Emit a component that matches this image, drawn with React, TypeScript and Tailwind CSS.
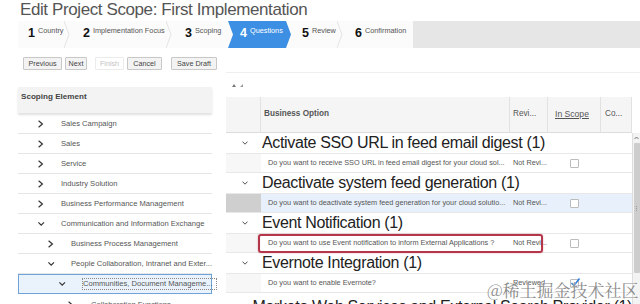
const steps = [
  { n: 1, label: "Country", w: "w-[52px]", pl: "pl-[10px]", sep: true },
  { n: 2, label: "Implementation Focus", w: "w-[102px]", pl: "pl-[13px]", sep: true },
  { n: 3, label: "Scoping", w: "w-[56px]", pl: "pl-[13px]", sep: false },
  { n: 4, label: "Questions", w: "w-[63px]", pl: "pl-[12px]", sep: false, active: true },
  { n: 5, label: "Review", w: "w-[52px]", pl: "pl-[11px]", sep: true },
  { n: 6, label: "Confirmation", w: "w-[70px]", pl: "pl-[12px]", sep: false },
];

const tree = [
  { t: "Sales Campaign", l: 1, open: false },
  { t: "Sales", l: 1, open: false },
  { t: "Service", l: 1, open: false },
  { t: "Industry Solution", l: 1, open: false },
  { t: "Business Performance Management", l: 1, open: false },
  { t: "Communication and Information Exchange", l: 1, open: true },
  { t: "Business Process Management", l: 2, open: false },
  { t: "People Collaboration, Intranet and Exter...", l: 2, open: true },
  { t: "Communities, Document Manageme...", l: 3, open: true, selected: true },
  { t: "Collaboration Functions", l: 4, open: false },
];

const indent: Record<number, string> = {
  1: "pl-[20px]",
  2: "pl-[30px]",
  3: "pl-[40px]",
  4: "pl-[50px]",
};

const groups = [
  {
    title: "Activate SSO URL in feed email digest (1)",
    q: "Do you want to receive SSO URL in feed email digest for your cloud sol...",
    status: "Not Revi...",
  },
  {
    title: "Deactivate system feed generation (1)",
    q: "Do you want to deactivate system feed generation for your cloud solutio...",
    status: "Not Revi...",
    selected: true,
  },
  {
    title: "Event Notification (1)",
    q: "Do you want to use Event notification to inform External Applications ?",
    status: "Not Revi...",
    marked: true,
  },
  {
    title: "Evernote Integration (1)",
    q: "Do you want to enable Evernote?",
    status: "Reviewed",
    checked: true,
  },
];

function TreeChevron({ open }: { open: boolean }) {
  return (
    <svg width="8" height="8" viewBox="0 0 8 8" className="shrink-0">
      {open ? (
        <path d="M0.4 2.4 L3.2 5.2 L6 2.4" fill="none" stroke="#333" strokeWidth="1.2" />
      ) : (
        <path d="M0.6 0.8 L4.4 4 L0.6 7.2" fill="none" stroke="#333" strokeWidth="1.2" />
      )}
    </svg>
  );
}

function GroupChevron() {
  return (
    <svg width="6" height="4" viewBox="0 0 6 4">
      <path d="M0.5 0.6 L3 3.2 L5.5 0.6" fill="none" stroke="#555" strokeWidth="1" />
    </svg>
  );
}

function Checkbox({ checked }: { checked?: boolean }) {
  return (
    <div className="relative h-[9px] w-[9px] rounded-[1px] border border-[#bcbcbc] bg-white">
      {checked && (
        <svg width="11" height="11" viewBox="0 0 11 11" className="absolute -left-px -top-[3px]">
          <path d="M1.5 6 L4 8.5 L9.5 1.5" fill="none" stroke="#2f7fd6" strokeWidth="1.6" />
        </svg>
      )}
    </div>
  );
}

function Steps() {
  return (
    <div className="ml-[18px] flex h-[27px] bg-[#e6e6e6]">
      <div className="flex bg-[#fbfbfb]">
        {steps.map((s) =>
          s.active ? (
            <div
              key={s.n}
              className={`flex ${s.w} ${s.pl} bg-[#3d8fe4] pt-[6px] text-white [clip-path:polygon(0_0,calc(100%_-_5px)_0,100%_50%,calc(100%_-_5px)_100%,0_100%,5px_50%)]`}
            >
              <span className="text-[12.5px] font-bold leading-none">{s.n}</span>
              <span className="ml-[3px] whitespace-nowrap text-[7.3px] leading-none">{s.label}</span>
            </div>
          ) : (
            <div key={s.n} className={`flex ${s.w} ${s.pl}`}>
              <span className="pt-[6px] text-[12.5px] font-bold leading-none text-[#111]">{s.n}</span>
              <span className="ml-[3px] whitespace-nowrap pt-[6px] text-[7.3px] leading-none text-[#555]">
                {s.label}
              </span>
              {s.sep && (
                <svg width="6" height="27" viewBox="0 0 6 27" className="ml-auto shrink-0">
                  <path d="M0 0 L5 13.5 L0 27" fill="none" stroke="#e4e4e4" strokeWidth="1" />
                </svg>
              )}
            </div>
          )
        )}
      </div>
    </div>
  );
}

function Buttons() {
  const btn =
    "flex h-[13px] items-center justify-center rounded-[1px] border text-[7.2px] leading-none";
  return (
    <div className="ml-[23px] mt-[9px] flex">
      <div className={`${btn} w-[39px] border-[#c8c8c8] bg-[#f3f3f3] text-[#444]`}>Previous</div>
      <div className={`${btn} ml-[3px] w-[22px] border-[#c8c8c8] bg-[#f3f3f3] text-[#444]`}>Next</div>
      <div className={`${btn} ml-[8px] w-[29px] border-[#ececec] bg-white text-[#c4c4c4]`}>Finish</div>
      <div className={`${btn} ml-[3px] w-[35px] border-[#c8c8c8] bg-[#f3f3f3] text-[#444]`}>Cancel</div>
      <div className={`${btn} ml-[9px] w-[46px] border-[#c8c8c8] bg-[#f3f3f3] text-[#444]`}>Save Draft</div>
    </div>
  );
}

function ScopingTree() {
  return (
    <div className="ml-[18px] w-[194px] pt-[17px]">
      <div className="h-[26px] bg-[#f3f3f3] pl-[3px] pt-[6px] text-[8.1px] font-bold leading-none text-[#444] shadow-[0_2px_2px_rgba(0,0,0,0.12)]">
        Scoping Element
      </div>
      <div className="mt-px">
        {tree.map((r) => (
          <div
            key={r.t}
            className={`flex h-[20px] items-center ${indent[r.l]} ${
              r.selected
                ? "border border-[#6fa3d8] bg-[#eaf3fc]"
                : "border-b border-[#e6e6e6]"
            } ${r.l === 4 ? "mt-px" : ""}`}
          >
            <TreeChevron open={r.open} />
            <span
              className={`ml-[15px] whitespace-nowrap text-[7.6px] leading-[10px] text-[#555] ${
                r.selected ? "border border-dotted border-[#8a8a8a] pr-[3px]" : ""
              }`}
            >
              {r.t}
            </span>
          </div>
        ))}
      </div>
    </div>
  );
}

function QuestionTable() {
  return (
    <div className="ml-[14px] mt-[2px] flex-1 border-t border-[#efefef]">
      <div className="flex h-[24px] items-center gap-[4px] pl-[6px]">
        <svg width="4" height="3" viewBox="0 0 4 3">
          <path d="M0 3 L2 0 L4 3 Z" fill="#777" />
        </svg>
        <svg width="3" height="3" viewBox="0 0 3 3">
          <path d="M0 3 L3 0 L3 3 Z" fill="#999" />
        </svg>
      </div>
      <div className="flex h-[36px] w-[406px] items-center border-b border-[#dcdcdc] bg-[#f5f5f5] text-[8.2px] text-[#555]">
        <div className="h-full w-[35px] border-r border-[#e2e2e2]" />
        <div className="flex h-full w-[249px] items-center border-r border-[#e2e2e2] pl-[3px] font-bold">
          Business Option
        </div>
        <div className="flex h-full w-[38px] items-center border-r border-[#e2e2e2] pl-[3px]">Revi...</div>
        <div className="flex h-full w-[53px] items-center border-r border-[#e2e2e2] pl-[7px] text-[8.6px] underline">
          In Scope
        </div>
        <div className="flex h-full w-[31px] items-center border-r border-[#e2e2e2] pl-[4px]">Co...</div>
      </div>
      <div className="flex">
        <div className="w-[406px]">
          {groups.map((g) => (
            <div key={g.title}>
              <div className="flex h-[20px] items-center">
                <div className="w-[35px] pl-[16px]">
                  <GroupChevron />
                </div>
                <div className="whitespace-nowrap pl-px text-[16px] leading-[20px] tracking-[-0.35px] text-[#222]">
                  {g.title}
                </div>
              </div>
              <div
                className={`relative flex h-[20px] items-center border-y border-[#e8e8e8] text-[7.3px] text-[#555] ${
                  g.selected ? "bg-[#e8f1fb]" : "bg-white"
                }`}
              >
                <div className={`h-full w-[35px] ${g.selected ? "bg-[#cfcfcf]" : "bg-[#f7f7f7]"}`} />
                <div className="w-[249px] whitespace-nowrap pl-[7px]">{g.q}</div>
                <div className="w-[38px] whitespace-nowrap pl-[3px]">{g.status}</div>
                <div className="w-[53px] pl-[22px]">
                  <Checkbox checked={g.checked} />
                </div>
                <div className="w-[31px]" />
                {g.marked && (
                  <div className="absolute left-[32px] top-0 h-[19px] w-[285px] rounded-[3px] border-2 border-[#b5364a] shadow-[0_0_2px_rgba(181,54,74,0.4)]" />
                )}
              </div>
            </div>
          ))}
          <div className="mt-[4px] flex h-[20px] items-center">
            <div className="w-[35px] pl-[16px]">
              <GroupChevron />
            </div>
            <div className="whitespace-nowrap pl-px text-[16px] leading-[20px] tracking-[-0.35px] text-[#222]">
              Marketo Web Services and External Search Provider (1)
            </div>
          </div>
        </div>
        <div className="w-[8px] border-l border-[#dedede] bg-[#f3f3f3]">
          <svg width="7" height="6" viewBox="0 0 7 6" className="mt-[2px]">
            <path d="M1.5 4 L3.5 2 L5.5 4" fill="none" stroke="#666" strokeWidth="0.9" />
          </svg>
          <div className="mx-auto mt-[2px] flex h-[130px] w-[6px] items-center justify-center rounded-[1px] bg-[#cdcdcd]">
            <div className="flex flex-col gap-[1px]">
              <div className="h-px w-px bg-[#999]" />
              <div className="h-px w-px bg-[#999]" />
              <div className="h-px w-px bg-[#999]" />
            </div>
          </div>
        </div>
      </div>
    </div>
  );
}

export default function App() {
  return (
    <div className="relative h-[304px] w-[640px] overflow-hidden bg-white font-['Liberation_Sans',Arial,sans-serif] text-[#444]">
      <div className="h-[21px] whitespace-nowrap pl-[20px] pt-[2px] text-[17px] leading-[16px] tracking-[-0.4px] text-[#555]">
        Edit Project Scope: First Implementation
      </div>
      <Steps />
      <Buttons />
      <div className="flex">
        <ScopingTree />
        <QuestionTable />
      </div>
      <div className="pointer-events-none absolute left-[487px] top-[281px] whitespace-nowrap font-['Noto_Serif_CJK_SC','Noto_Sans_CJK_SC',serif] text-[17px] leading-none text-[#8c8c8c] [text-shadow:0_0_2px_#fff]">
        @稀土掘金技术社区
      </div>
    </div>
  );
}
